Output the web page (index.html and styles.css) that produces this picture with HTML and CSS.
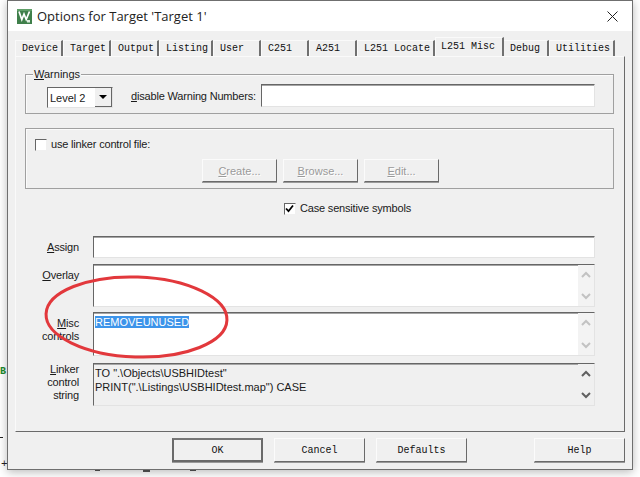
FILE: index.html
```html
<!DOCTYPE html>
<html lang="en">
<head>
<meta charset="utf-8">
<title>Options for Target 'Target 1'</title>
<link rel="stylesheet" href="styles.css">
</head>
<body>
<span class="bg-code">B</span>
<span class="bg-dash"></span>
<span class="bg-plus">+</span>
<span class="bg-under bg-u1"></span>
<span class="bg-under bg-u2"></span>
<span class="bg-under bg-u3"></span>
<div class="window">
  <header class="titlebar">
    <svg class="app-icon" width="15" height="15" viewBox="0 0 15 15" aria-hidden="true">
      <rect width="15" height="15" fill="#3f7f4a"/>
      <rect x="0" y="0" width="15" height="2" fill="#5f9f68"/>
      <path d="M2 2.5 L4.8 10.5 L7 5 L9.2 10.5 L12.5 2.5" fill="none" stroke="#fff" stroke-width="1.7"/>
      <path d="M10 11 h3 v2.5 h-3 z" fill="#dfeee0"/>
    </svg>
    <span class="title">Options for Target 'Target 1'</span>
    <svg class="close" width="11" height="11" viewBox="0 0 11 11" aria-hidden="true">
      <path d="M0.5 0.5 L10.5 10.5 M10.5 0.5 L0.5 10.5" stroke="#222" stroke-width="1" fill="none"/>
    </svg>
  </header>

  <div class="client">
    <nav class="tabs">
      <span class="tab">Device</span>
      <span class="tab">Target</span>
      <span class="tab">Output</span>
      <span class="tab">Listing</span>
      <span class="tab">User</span>
      <span class="tab">C251</span>
      <span class="tab">A251</span>
      <span class="tab">L251 Locate</span>
      <span class="tab tab-active">L251 Misc</span>
      <span class="tab tab-debug">Debug</span>
      <span class="tab tab-last">Utilities</span>
    </nav>

    <section class="panel">
      <div class="group group-warnings">
        <div class="legend"><u>W</u>arnings</div>
        <div class="warn-row">
          <div class="select">
            <span class="select-value">Level 2</span>
            <span class="select-btn"><i class="caret"></i></span>
          </div>
          <span class="warn-label"><u>d</u>isable Warning Numbers:</span>
          <div class="field warn-input"></div>
        </div>
      </div>

      <div class="group group-linker">
        <label class="check check-linker"><span class="box"></span>use linker control file:</label>
        <div class="btn-row">
          <span class="btn btn-off"><u>C</u>reate...</span>
          <span class="btn btn-off"><u>B</u>rowse...</span>
          <span class="btn btn-off"><u>E</u>dit...</span>
        </div>
      </div>

      <label class="check check-case">
        <span class="box">
          <svg width="11" height="11" viewBox="0 0 11 11" aria-hidden="true"><path d="M2 5.5 L4.5 8.2 L9 2.5" fill="none" stroke="#000" stroke-width="1.8"/></svg>
        </span>Case sensitive symbols
      </label>

      <div class="form">
        <div class="row row-assign">
          <span class="lbl lbl-assign"><u>A</u>ssign</span>
          <div class="field"></div>
        </div>
        <div class="row row-overlay">
          <span class="lbl lbl-overlay"><u>O</u>verlay</span>
          <div class="field field-scroll">
            <div class="text"></div>
            <div class="scroll scroll-off">
              <svg width="10" height="7" viewBox="0 0 10 7" aria-hidden="true"><path d="M1 6 L5 2 L9 6" fill="none" stroke="currentColor" stroke-width="2"/></svg>
              <svg width="10" height="7" viewBox="0 0 10 7" aria-hidden="true"><path d="M1 1 L5 5 L9 1" fill="none" stroke="currentColor" stroke-width="2"/></svg>
            </div>
          </div>
        </div>
        <div class="row row-misc">
          <span class="lbl lbl-misc"><u>M</u>isc<br>controls</span>
          <div class="field field-scroll">
            <div class="text"><span class="selected">REMOVEUNUSED</span></div>
            <div class="scroll scroll-off">
              <svg width="10" height="7" viewBox="0 0 10 7" aria-hidden="true"><path d="M1 6 L5 2 L9 6" fill="none" stroke="currentColor" stroke-width="2"/></svg>
              <svg width="10" height="7" viewBox="0 0 10 7" aria-hidden="true"><path d="M1 1 L5 5 L9 1" fill="none" stroke="currentColor" stroke-width="2"/></svg>
            </div>
          </div>
        </div>
        <div class="row row-string">
          <span class="lbl lbl-string"><u>L</u>inker<br>control<br>string</span>
          <div class="field field-scroll field-readonly">
            <div class="text">TO ".\Objects\USBHIDtest"<br>PRINT(".\Listings\USBHIDtest.map") CASE</div>
            <div class="scroll scroll-on">
              <svg width="10" height="7" viewBox="0 0 10 7" aria-hidden="true"><path d="M1 6 L5 2 L9 6" fill="none" stroke="currentColor" stroke-width="2"/></svg>
              <svg width="10" height="7" viewBox="0 0 10 7" aria-hidden="true"><path d="M1 1 L5 5 L9 1" fill="none" stroke="currentColor" stroke-width="2"/></svg>
            </div>
          </div>
        </div>
      </div>
    </section>

    <footer class="actions">
      <span class="btn btn-main btn-default">OK</span>
      <span class="btn btn-main">Cancel</span>
      <span class="btn btn-main">Defaults</span>
      <span class="btn btn-main btn-help">Help</span>
    </footer>
  </div>
</div>
<svg class="annotation" width="640" height="477" viewBox="0 0 640 477" aria-hidden="true">
  <ellipse cx="136.5" cy="317" rx="90.5" ry="40" transform="rotate(2 136.5 317)" fill="none" stroke="#e2383c" stroke-width="3"/>
</svg>
</body>
</html>
```
FILE: styles.css
```css
* { box-sizing: border-box; }
html, body { margin: 0; height: 100%; }
body {
  position: relative;
  width: 640px;
  height: 477px;
  overflow: hidden;
  background: #fff;
  font-family: "Liberation Sans", Arial, sans-serif;
  font-size: 11px;
  color: #1a1a1a;
}

.bg-code { position: absolute; left: 0; top: 366px; color: #1d8a2d; font: bold 10px "Liberation Mono", monospace; }
.bg-dash { position: absolute; left: 0; top: 437px; width: 3px; height: 1px; background: #222; }
.bg-plus { position: absolute; left: 1px; top: 458px; font: 11px "Liberation Mono", monospace; color: #222; }
.bg-under { position: absolute; top: 470px; height: 1px; background: #555; }
.bg-u1 { left: 95px; width: 5px; }
.bg-u2 { left: 143px; width: 7px; height: 2px; }
.bg-u3 { left: 190px; width: 6px; }

.window {
  position: absolute;
  left: 7px;
  top: 0;
  width: 626px;
  height: 470px;
  display: flex;
  flex-direction: column;
  background: #f0f0f0;
  border: 1px solid #6f6f6f;
  box-shadow: 0 2px 9px rgba(0, 0, 0, .28);
}

.titlebar {
  height: 30px;
  flex: none;
  display: flex;
  align-items: center;
  background: #fff;
  padding: 0 14px 0 9px;
}
.app-icon { flex: none; }
.title {
  margin-left: 5px;
  font-family: "Open Sans", sans-serif;
  font-size: 13px;
  color: #222;
}
.close { margin-left: auto; }

.client { flex: 1; display: flex; flex-direction: column; padding: 0 7px 0 7px; }

.tabs { display: flex; height: 25px; padding: 9px 0 0; flex: none; }
.tab {
  min-width: 48px;
  height: 16px;
  padding: 0 3px 0 6px;
  font: 10px/16px "Liberation Mono", monospace;
  color: #111;
  border-top: 1px solid #fafafa;
  border-left: 1px solid #fafafa;
  border-right: 2px solid #707070;
  white-space: pre;
  background: #f0f0f0;
}
.tab-active {
  height: 19px;
  margin: -3px -1px 0 0;
  padding: 0 0 0 5px;
  width: 69px;
  line-height: 17px;
  position: relative;
  border-bottom: 0;
}
.tab-debug { min-width: 46px; }

.panel {
  height: 376px;
  flex: none;
  padding: 17px 10px 0 9px;
  border-top: 1px solid #fafafa;
  border-left: 1px solid #fafafa;
  border-right: 1px solid #6a6a6a;
  border-bottom: 1px solid #6a6a6a;
}

.group { border: 1px solid #a0a0a0; box-shadow: inset 1px 1px 0 #fbfbfb; }
.legend {
  width: fit-content;
  margin: -7px 0 0 7px;
  padding: 0 1px;
  line-height: 13px;
  background: #f0f0f0;
}
.group-warnings { height: 40px; }
.warn-row { display: flex; align-items: flex-start; height: 26px; padding-left: 21px; margin-top: 3px; }
.select {
  width: 66px;
  height: 21px;
  margin-top: 3px;
  display: flex;
  background: #fff;
  border: 1px solid;
  border-color: #666 #e3e3e3 #e3e3e3 #666;
}
.select-value { flex: 1; padding-left: 2px; line-height: 20px; }
.select-btn {
  width: 17px;
  display: flex;
  align-items: center;
  justify-content: center;
  background: #f0f0f0;
  border-right: 1px solid #666;
  border-bottom: 1px solid #666;
}
.caret { width: 0; height: 0; border: 4px solid transparent; border-top-color: #000; border-bottom: 0; }
.warn-label { margin: 5px 0 0 18px; width: 130px; line-height: 14px; white-space: nowrap; letter-spacing: -.18px; }
.warn-input { width: 334px; height: 23px; }

.field {
  background: #fff;
  border: 1px solid;
  border-color: #666 #e3e3e3 #e3e3e3 #666;
  box-shadow: inset 0 1px 0 #a5a5a5;
}

.group-linker { height: 61px; margin-top: 14px; padding: 9px 0 0 9px; }
.check { display: flex; align-items: center; line-height: 13px; letter-spacing: -.18px; }
.box {
  width: 12px;
  height: 12px;
  flex: none;
  margin-right: 4px;
  background: #fff;
  border: 1px solid;
  border-color: #666 #f0f0f0 #f0f0f0 #666;
}
.box svg { display: block; margin: -1px 0 0 -1px; }
.btn-row { display: flex; gap: 6px; margin: 8px 0 0 167px; }
.btn {
  display: flex;
  align-items: center;
  justify-content: center;
  height: 23px;
  border: 1px solid;
  border-color: #fbfbfb #6a6a6a #6a6a6a #fbfbfb;
  box-shadow: 0 1px 0 #9a9a9a;
}
.btn-row .btn { width: 75px; }
.btn-off { color: #9a9a9a; text-shadow: 1px 1px 0 #fff; }

.check-case { margin: 13px 0 0 259px; }

.form { margin-top: 21px; padding-right: 19px; display: flex; flex-direction: column; }
.row { display: grid; grid-template-columns: 54px 502px; column-gap: 14px; }
.row-assign { height: 22px; }
.row-overlay { height: 43px; margin-top: 6px; }
.row-misc { height: 44px; margin-top: 5px; }
.row-string { height: 43px; margin-top: 7px; }
.lbl { text-align: right; line-height: 13px; white-space: nowrap; letter-spacing: -.18px; }
.lbl-assign { padding-top: 5px; }
.lbl-overlay { padding-top: 5px; }
.lbl-misc { padding-top: 5px; }
.lbl-string { padding-top: 0; }

.field-scroll { display: flex; }
.text { flex: 1; padding: 2px 0 0 1px; line-height: 14px; }
.field-readonly { background: #f0f0f0; }
.selected { background: #3d94ea; color: #fff; }
.scroll {
  width: 16px;
  flex: none;
  display: flex;
  flex-direction: column;
  align-items: center;
  justify-content: space-between;
  padding: 6px 0 6px;
  background: #f3f3f3;
}
.scroll-off { color: #c2c2c2; }
.scroll-on { color: #606060; background: #f0f0f0; }

.actions { flex: 1; display: flex; padding: 6px 0 0 157px; align-items: flex-start; }
.btn-main {
  width: 91px;
  height: 24px;
  margin-right: 11px;
  font: 10px "Liberation Mono", monospace;
  color: #111;
}
.btn-default { border: 2px solid #6a6a6a; border-top-color: #777; }
.btn-help { margin: 0 0 0 56px; }

.annotation { position: absolute; left: 0; top: 0; pointer-events: none; }
```
